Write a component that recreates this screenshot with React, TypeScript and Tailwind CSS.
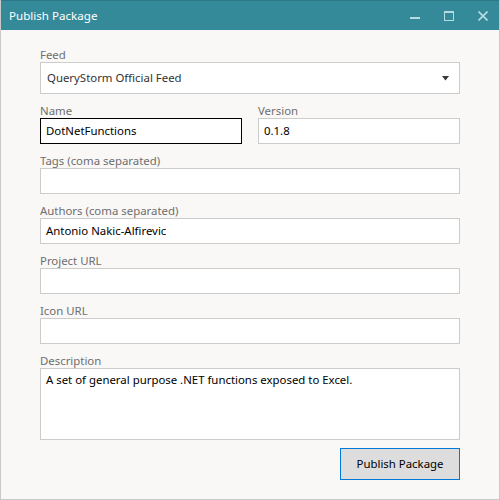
import React from "react";

const font = { fontFamily: '"Noto Sans", "Open Sans", sans-serif' };

function Label({ text }: { text: string }) {
  return <label className="h-4 text-[11.4px] leading-[17px] text-[#6e6e6e]">{text}</label>;
}

function Field({ label, value, className = "" }: { label: string; value?: string; className?: string }) {
  return (
    <div className={`flex flex-col ${className}`}>
      <Label text={label} />
      <div className="h-[26px] border border-[#cccccc] bg-white px-[5px] text-[11.4px] leading-[24px] text-black">
        {value}
      </div>
    </div>
  );
}

export default function App() {
  return (
    <div className="flex h-[500px] w-[500px] flex-col border border-t-0 border-[#c9c9c9] bg-[#f9f8f7]" style={font}>
      <div className="flex h-[30px] items-center border-t border-[#2d7885] bg-[#358a99] text-white">
        <span className="pl-[8px] text-[11.6px]">Publish Package</span>
        <div className="ml-auto flex items-center">
          <svg className="mr-[24px]" width="10" height="10" viewBox="0 0 10 10">
            <rect x="0" y="6" width="10" height="2" fill="#b6dce2" />
          </svg>
          <svg className="mr-[24px]" width="10" height="10" viewBox="0 0 10 10">
            <rect x="0.5" y="0.5" width="9" height="9" fill="none" stroke="#b6dce2" />
            <rect x="0" y="0" width="10" height="2" fill="#b6dce2" />
          </svg>
          <svg className="mr-[11px]" width="10" height="10" viewBox="0 0 10 10">
            <path d="M0.5 0.5 L9.5 9.5 M9.5 0.5 L0.5 9.5" stroke="#b6dce2" strokeWidth="1.6" />
          </svg>
        </div>
      </div>

      <div className="flex flex-1 flex-col px-[39px] pt-[16px]">
        <div className="flex flex-col">
          <Label text="Feed" />
          <div className="flex h-[32px] items-center border border-[#cccccc] bg-white pl-[6px] pr-[10px] text-[11.4px] text-[#333333]">
            <span>QueryStorm Official Feed</span>
            <svg className="ml-auto" width="7" height="5" viewBox="0 0 7 5">
              <path d="M0 0 H7 L3.5 4.5 Z" fill="#3a3a3a" />
            </svg>
          </div>
        </div>

        <div className="mt-2 grid grid-cols-2 gap-x-4">
          <div className="flex flex-col">
            <Label text="Name" />
            <div className="h-[26px] border border-black bg-white px-[5px] text-[11.4px] leading-[24px] text-black">
              DotNetFunctions
            </div>
          </div>
          <Field label="Version" value="0.1.8" />
        </div>

        <Field className="mt-2" label="Tags (coma separated)" />
        <Field className="mt-2" label="Authors (coma separated)" value="Antonio Nakic-Alfirevic" />
        <Field className="mt-2" label="Project URL" />
        <Field className="mt-2" label="Icon URL" />

        <div className="mt-2 flex flex-col">
          <Label text="Description" />
          <div className="h-[72px] border border-[#cccccc] bg-white px-[5px] pt-[2px] text-[11.4px] leading-[18px] text-black">
            A set of general purpose .NET functions exposed to Excel.
          </div>
        </div>

        <div className="mt-2 flex justify-end">
          <button className="h-[32px] w-[120px] border border-[#0078d7] bg-[#dddddd] text-[11.4px] text-black">
            Publish Package
          </button>
        </div>
      </div>
    </div>
  );
}
